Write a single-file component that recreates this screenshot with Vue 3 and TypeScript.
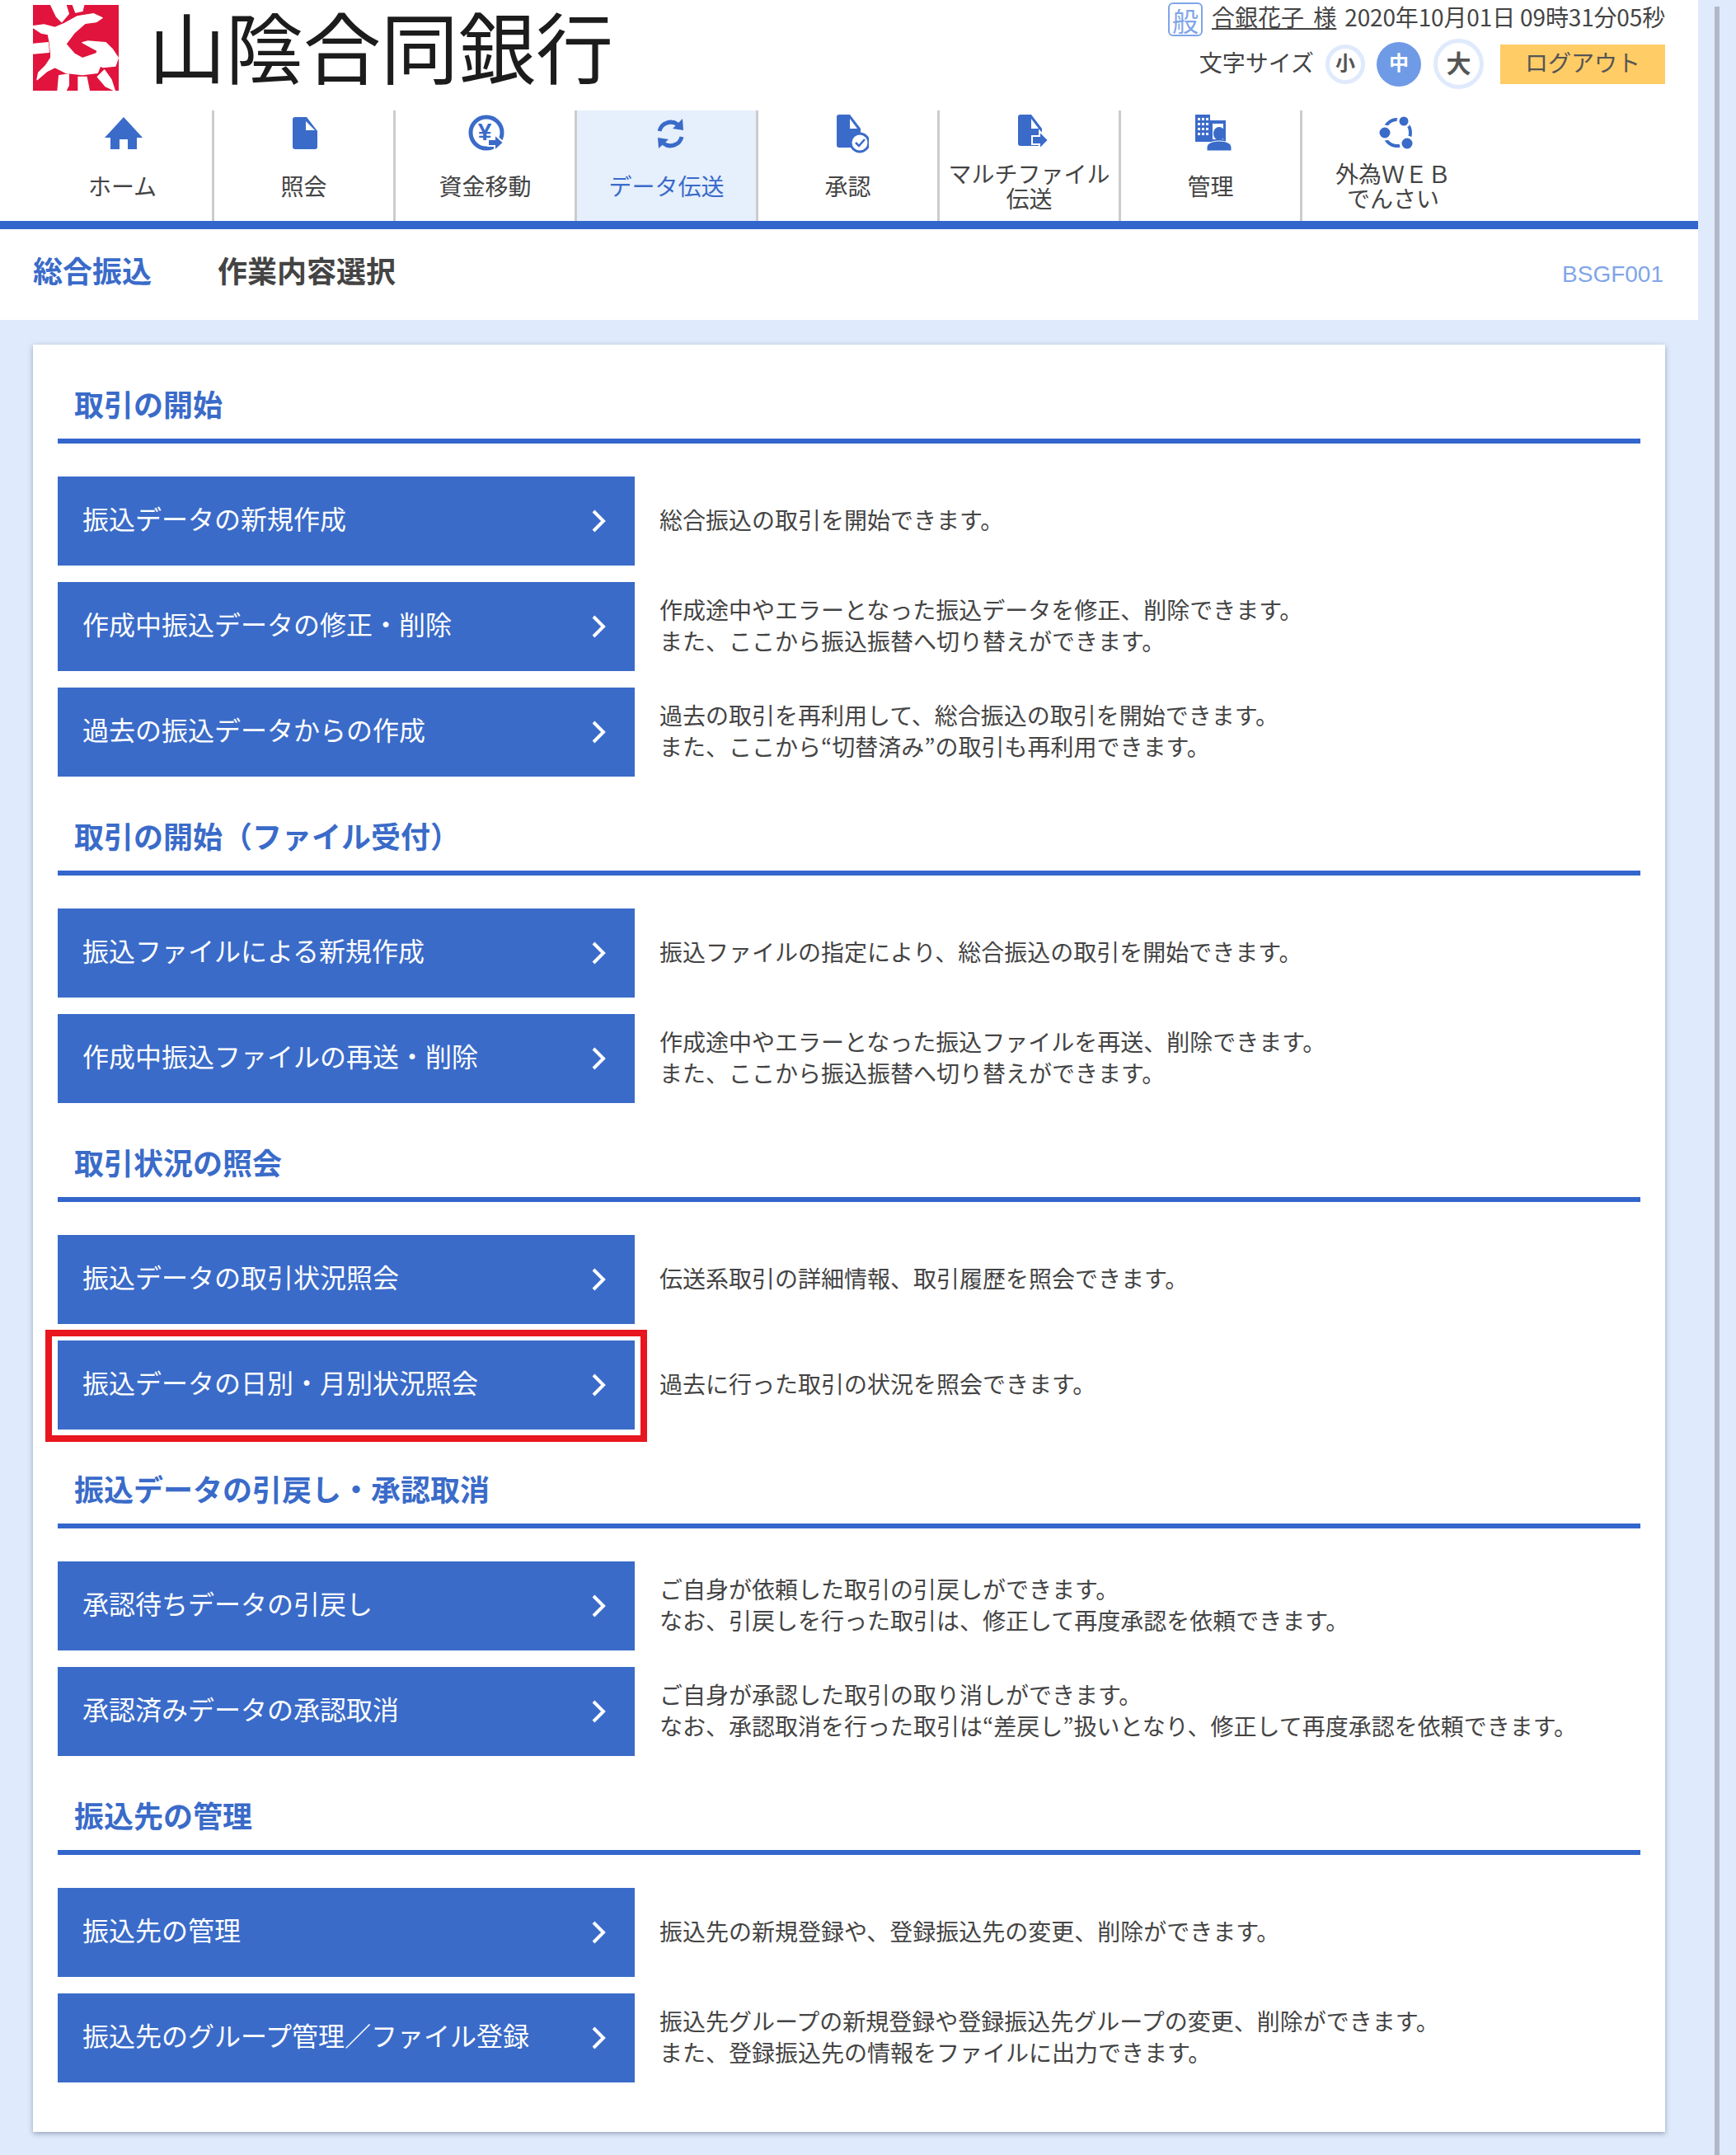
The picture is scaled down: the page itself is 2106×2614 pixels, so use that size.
<script setup lang="ts">
interface Row { label: string; lines: string[]; highlight?: boolean }
interface Section { title: string; rows: Row[] }

const navItems: { id: string; lines: string[]; active?: boolean }[] = [
  { id: 'home', lines: ['ホーム'] },
  { id: 'doc', lines: ['照会'] },
  { id: 'yen', lines: ['資金移動'] },
  { id: 'sync', lines: ['データ伝送'], active: true },
  { id: 'approve', lines: ['承認'] },
  { id: 'multi', lines: ['マルチファイル', '伝送'] },
  { id: 'admin', lines: ['管理'] },
  { id: 'fx', lines: ['外為ＷＥＢ', 'でんさい'] },
]

const sections: Section[] = [
  {
    title: '取引の開始',
    rows: [
      { label: '振込データの新規作成', lines: ['総合振込の取引を開始できます。'] },
      { label: '作成中振込データの修正・削除', lines: ['作成途中やエラーとなった振込データを修正、削除できます。', 'また、ここから振込振替へ切り替えができます。'] },
      { label: '過去の振込データからの作成', lines: ['過去の取引を再利用して、総合振込の取引を開始できます。', 'また、ここから“切替済み”の取引も再利用できます。'] },
    ],
  },
  {
    title: '取引の開始（ファイル受付）',
    rows: [
      { label: '振込ファイルによる新規作成', lines: ['振込ファイルの指定により、総合振込の取引を開始できます。'] },
      { label: '作成中振込ファイルの再送・削除', lines: ['作成途中やエラーとなった振込ファイルを再送、削除できます。', 'また、ここから振込振替へ切り替えができます。'] },
    ],
  },
  {
    title: '取引状況の照会',
    rows: [
      { label: '振込データの取引状況照会', lines: ['伝送系取引の詳細情報、取引履歴を照会できます。'] },
      { label: '振込データの日別・月別状況照会', lines: ['過去に行った取引の状況を照会できます。'], highlight: true },
    ],
  },
  {
    title: '振込データの引戻し・承認取消',
    rows: [
      { label: '承認待ちデータの引戻し', lines: ['ご自身が依頼した取引の引戻しができます。', 'なお、引戻しを行った取引は、修正して再度承認を依頼できます。'] },
      { label: '承認済みデータの承認取消', lines: ['ご自身が承認した取引の取り消しができます。', 'なお、承認取消を行った取引は“差戻し”扱いとなり、修正して再度承認を依頼できます。'] },
    ],
  },
  {
    title: '振込先の管理',
    rows: [
      { label: '振込先の管理', lines: ['振込先の新規登録や、登録振込先の変更、削除ができます。'] },
      { label: '振込先のグループ管理／ファイル登録', lines: ['振込先グループの新規登録や登録振込先グループの変更、削除ができます。', 'また、登録振込先の情報をファイルに出力できます。'] },
    ],
  },
]
</script>

<template>
  <div class="page">
    <div class="main">
      <header class="header">
        <div class="top">
          <div class="brand">
            <svg class="logo" viewBox="120 18 312 312" aria-hidden="true">
              <rect x="120" y="18" width="312" height="312" fill="#e0143c" />
              <g fill="#fff" stroke="#fff" stroke-width="4" stroke-linejoin="round">
                <path d="M120 95 160 90 200 100 235 85 280 60 340 50 372 65 350 80 310 85 270 120 240 160 270 195 300 212 350 195 355 185 300 155 320 150 385 155 410 180 430 210 420 240 375 245 365 240 355 265 300 272 240 265 200 245 170 260 135 290 140 265 165 240 185 210 185 195 180 150 175 125 150 120 120 100Z" />
                <path d="M185 18 240 18 250 50 225 80 205 60Z" />
                <path d="M265 18 305 18 300 40 275 45Z" />
                <path d="M120 160 175 155 178 190 120 195Z" />
                <path d="M215 275 250 270 250 310 240 330 210 330Z" />
                <path d="M285 280 315 280 325 330 285 330Z" />
                <path d="M355 280 380 255 405 290 418 330 385 315Z" />
              </g>
            </svg>
            <span class="bank">山陰合同銀行</span>
          </div>
          <div class="user">
            <div class="user-row">
              <span class="badge">般</span>
              <span class="name">合銀花子 様</span>
              <span class="date">2020年10月01日 09時31分05秒</span>
            </div>
            <div class="size-row">
              <span class="size-label">文字サイズ</span>
              <span class="size small">小</span>
              <span class="size medium">中</span>
              <span class="size large">大</span>
              <button class="logout" type="button">ログアウト</button>
            </div>
          </div>
        </div>
        <nav class="nav">
          <div v-for="item in navItems" :key="item.id" class="nav-item" :class="{ active: item.active }">
            <svg class="nav-icon" viewBox="0 0 48 48" aria-hidden="true">
              <template v-if="item.id === 'home'">
                <path d="M24 4 47 29H40V43H29V31H19V43H8V29H1Z" />
              </template>
              <template v-else-if="item.id === 'doc'">
                <path d="M12 4H26L39 21V40a3 3 0 0 1-3 3H12a3 3 0 0 1-3-3V7a3 3 0 0 1 3-3Z" />
                <path d="M25 9 36 20H25Z" fill="#fff" />
              </template>
              <template v-else-if="item.id === 'yen'">
                <circle cx="24" cy="23" r="19" fill="none" stroke="#3a6bc9" stroke-width="5" />
                <text x="22" y="32" class="yen">¥</text>
                <path d="M26 31h8v-6l11 10-11 10v-6h-8Z" stroke="#fff" stroke-width="2" />
              </template>
              <template v-else-if="item.id === 'sync'">
                <g transform="translate(3 0)">
                  <g fill="none" stroke="#3a6bc9" stroke-width="5">
                    <path d="M11 21A14 14 0 0 1 33 13" />
                    <path d="M38 28A14 14 0 0 1 16 36" />
                  </g>
                  <path d="M39 6 40 20 27 18Z" />
                  <path d="M10 42 9 29 22 31Z" />
                </g>
              </template>
              <template v-else-if="item.id === 'approve'">
                <path d="M12 1H25L38 18V41H12a3 3 0 0 1-3-3V4a3 3 0 0 1 3-3Z" />
                <path d="M25 6 34 18H25Z" fill="#fff" />
                <circle cx="37" cy="35" r="11" fill="#fff" stroke="#3a6bc9" stroke-width="3" />
                <path d="M32 35l4 4 7-8" fill="none" stroke="#3a6bc9" stroke-width="2.5" />
              </template>
              <template v-else-if="item.id === 'multi'">
                <path d="M12 1H25L38 18V36a3 3 0 0 1-3 3H12a3 3 0 0 1-3-3V4a3 3 0 0 1 3-3Z" />
                <path d="M25 6 34 18H25Z" fill="#fff" />
                <path d="M26 27h9v-6l11 11-11 11v-6h-9Z" stroke="#fff" stroke-width="2" />
              </template>
              <template v-else-if="item.id === 'admin'">
                <rect x="4" y="1" width="18" height="33" />
                <rect x="22" y="8" width="19" height="26" />
                <rect x="25" y="12" width="13" height="19" fill="#fff" />
                <g fill="#fff">
                  <rect x="7" y="5" width="3" height="3" /><rect x="12" y="5" width="3" height="3" /><rect x="17" y="5" width="3" height="3" />
                  <rect x="7" y="11" width="3" height="3" /><rect x="12" y="11" width="3" height="3" /><rect x="17" y="11" width="3" height="3" />
                  <rect x="7" y="17" width="3" height="3" /><rect x="12" y="17" width="3" height="3" /><rect x="17" y="17" width="3" height="3" />
                  <rect x="7" y="23" width="3" height="3" /><rect x="12" y="23" width="3" height="3" /><rect x="17" y="23" width="3" height="3" />
                </g>
                <ellipse cx="33" cy="24" rx="7" ry="8" />
                <path d="M18 45V41C18 36 24 33 33 33S48 36 48 41V45Z" stroke="#fff" stroke-width="1" />
              </template>
              <template v-else>
                <circle cx="27" cy="23" r="16" fill="none" stroke="#3a6bc9" stroke-width="4" />
                <g stroke="#fff" stroke-width="3">
                  <circle cx="35" cy="9" r="7" />
                  <circle cx="12" cy="23" r="8" />
                  <circle cx="39" cy="36" r="8" />
                </g>
              </template>
            </svg>
            <div class="nav-label">
              <span v-for="line in item.lines" :key="line">{{ line }}</span>
            </div>
          </div>
        </nav>
      </header>

      <div class="title-bar">
        <h1 class="title"><span class="title-group">総合振込</span><span class="title-page">作業内容選択</span></h1>
        <span class="screen-id">BSGF001</span>
      </div>

      <main class="content">
        <div class="card">
          <section v-for="section in sections" :key="section.title">
            <h2 class="section-title">{{ section.title }}</h2>
            <div class="rows">
              <div v-for="row in section.rows" :key="row.label" class="row">
                <div class="action">
                  <button class="action-btn" type="button">
                    <span>{{ row.label }}</span>
                    <svg class="chevron" viewBox="0 0 18 28" aria-hidden="true">
                      <path d="M3 2 15 14 3 26" fill="none" stroke="#fff" stroke-width="4" />
                    </svg>
                  </button>
                  <div v-if="row.highlight" class="highlight"></div>
                </div>
                <div class="desc">
                  <p v-for="line in row.lines" :key="line">{{ line }}</p>
                </div>
              </div>
            </div>
          </section>
        </div>
      </main>
    </div>
    <div class="edge"></div>
  </div>
</template>

<style>
html, body { margin: 0; background: #dfeafc; }
</style>

<style scoped>
.page {
  display: flex;
  align-items: stretch;
  min-height: 2614px;
  background: #dfeafc;
  color: #444;
  font-family: "Noto Sans CJK JP", "Liberation Sans", sans-serif;
  font-size: 28px;
}
.main { width: 2060px; }
.edge { width: 6px; margin: 8px 0 0 20px; background: #b1b9c6; }

.header { background: #fff; border-bottom: 10px solid #3366cc; }
.top { display: flex; justify-content: space-between; height: 134px; padding: 0 40px; box-sizing: border-box; }
.brand { display: flex; align-items: flex-start; gap: 36px; padding-top: 6px; }
.logo { width: 104px; height: 104px; display: block; }
.bank { font-size: 94px; line-height: 96px; color: #1c1c1c; white-space: nowrap; }

.user { display: flex; flex-direction: column; align-items: flex-end; padding-top: 3px; }
.user-row { display: flex; align-items: center; height: 41px; white-space: nowrap; }
.badge {
  width: 42px; height: 41px; box-sizing: border-box;
  display: flex; align-items: center; justify-content: center;
  border: 2px solid #7fa5e8; border-radius: 6px;
  color: #7fa5e8; font-size: 32px; line-height: 1; margin-right: 11px;
}
.name { text-decoration: underline; margin-right: 10px; line-height: 1.2; padding-bottom: 5px; word-spacing: 5px; }
.date { line-height: 1.2; padding-bottom: 5px; letter-spacing: -0.15px; }
.size-row { display: flex; align-items: center; height: 61px; margin-top: 3px; }
.size-label { margin-right: 14px; line-height: 1; padding-bottom: 6px; }
.size {
  display: flex; align-items: center; justify-content: center;
  box-sizing: border-box; border-radius: 50%; font-weight: 700; color: #555; line-height: 1;
  padding-bottom: 5px;
}
.small { width: 48px; height: 48px; border: 5px solid #dfeafc; font-size: 24px; margin-right: 14px; }
.medium { width: 54px; height: 54px; background: #6f9ae6; color: #fff; font-size: 24px; margin-right: 15px; }
.large { width: 61px; height: 61px; border: 5px solid #dfeafc; font-size: 30px; margin-right: 20px; }
.logout {
  width: 200px; height: 48px; border: 0; padding: 0 0 5px; background: #ffcc66;
  font: inherit; color: #555; line-height: 1;
}

.nav { display: flex; padding-left: 40px; height: 134px; }
.nav-item {
  width: 220px; box-sizing: border-box; border-right: 3px solid #ccc;
  display: flex; flex-direction: column; align-items: center; padding-top: 4px;
}
.nav-item:last-child { border-right: 0; }
.nav-item.active { background: #e6effc; color: #3a6bc9; }
.nav-icon { width: 48px; height: 48px; fill: #3a6bc9; flex: none; margin-left: 3px; }
.yen { font-size: 30px; font-weight: 700; text-anchor: middle; fill: #3a6bc9; font-family: "Liberation Sans", sans-serif; }
.nav-label {
  height: 78px; display: flex; flex-direction: column; align-items: center; justify-content: center;
  line-height: 30px; white-space: nowrap;
}

.title-bar {
  box-sizing: border-box;
  display: flex; align-items: center; justify-content: space-between;
  height: 110px; padding: 0 42px 0 40px; background: #fff;
}
.title { margin: 0 0 10px; font-size: 36px; font-weight: 700; color: #444; display: flex; line-height: 1.2; }
.title-group { color: #3a6bc9; margin-right: 80px; }
.screen-id { font-family: "Liberation Sans", sans-serif; font-size: 28px; color: #7fa5e8; }

.content { padding: 30px 40px 0; }
.card {
  background: #fff; padding: 0 30px 60px; box-shadow: 0 2px 6px rgba(60, 70, 100, .45);
}
.section-title {
  margin: 0; box-sizing: border-box; height: 120px; padding: 51px 0 23px 20px;
  font-size: 36px; line-height: 40px; font-weight: 700; color: #3a6bc9;
  border-bottom: 6px solid #3366cc;
}
.rows { display: flex; flex-direction: column; gap: 20px; padding-top: 40px; }
.row { display: flex; align-items: center; gap: 30px; }
.action { position: relative; flex: none; width: 700px; height: 108px; }
.action-btn {
  width: 100%; height: 100%; border: 0; padding: 0 35px 8px 30px; background: #3a6bc9; color: #fff;
  font: inherit; font-size: 32px; display: flex; align-items: center; justify-content: space-between;
  text-align: left;
}
.chevron { width: 18px; height: 28px; flex: none; margin-top: 8px; }
.highlight {
  position: absolute; inset: -13px -15px -15px -15px; border: 8px solid #e8161e; pointer-events: none;
}
.desc { padding-bottom: 4px; }
.desc p { margin: 0; line-height: 38px; }
</style>
